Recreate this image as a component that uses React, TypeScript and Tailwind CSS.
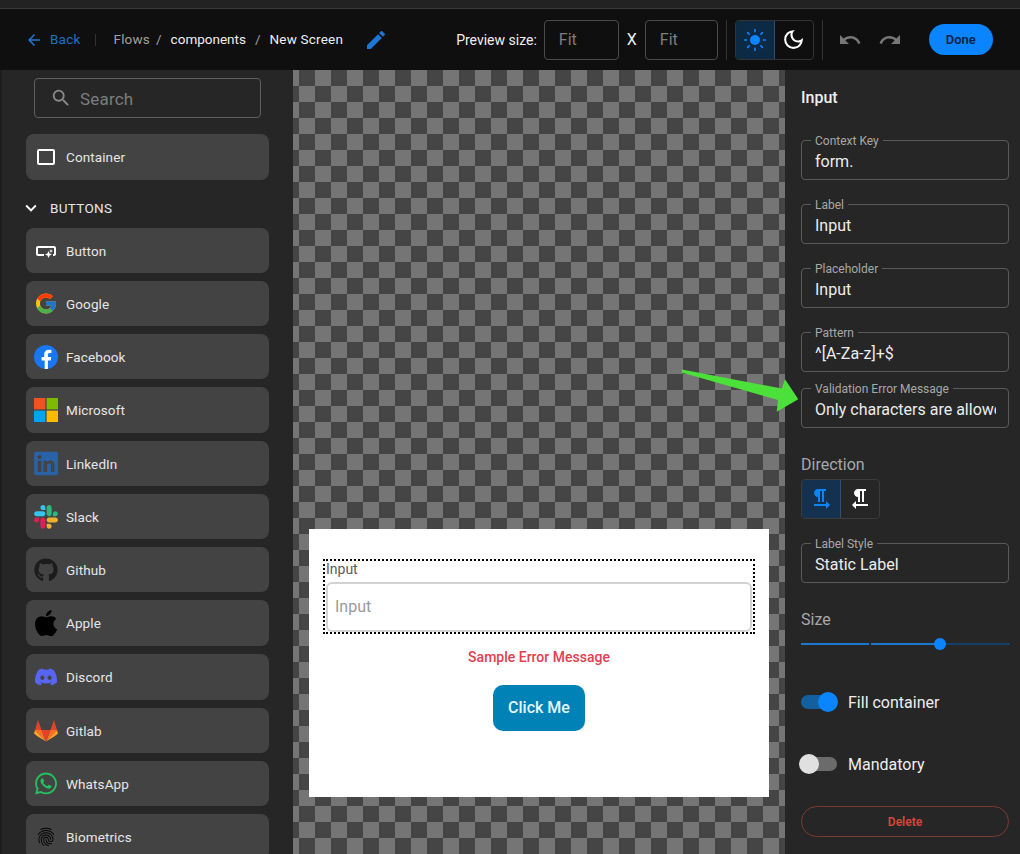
import type { ReactNode } from "react";
import {
  MdArrowBack,
  MdEdit,
  MdExpandMore,
  MdFormatTextdirectionLToR,
  MdFormatTextdirectionRToL,
  MdOutlineDarkMode,
  MdRedo,
  MdSearch,
  MdSmartButton,
  MdFingerprint,
  MdUndo,
} from "react-icons/md";
import { FcGoogle } from "react-icons/fc";
import { FaApple, FaDiscord, FaGithub, FaLinkedin, FaWhatsapp } from "react-icons/fa";

function FacebookIcon() {
  return (
    <svg viewBox="0 0 24 24" className="h-6 w-6">
      <circle cx="12" cy="12" r="12" fill="#1877f2" />
      <path
        fill="#fff"
        d="M16.7 15.5l.5-3.5h-3.3V9.8c0-1 .5-1.9 2-1.9h1.5v-3s-1.4-.2-2.7-.2c-2.7 0-4.5 1.7-4.5 4.6V12H7.6v3.5h3.1v8.4h3.2v-8.4z"
      />
    </svg>
  );
}

function MicrosoftIcon() {
  return (
    <svg viewBox="0 0 24 24" className="h-6 w-6">
      <rect width="11.4" height="11.4" fill="#f25022" />
      <rect x="12.6" width="11.4" height="11.4" fill="#7fba00" />
      <rect y="12.6" width="11.4" height="11.4" fill="#00a4ef" />
      <rect x="12.6" y="12.6" width="11.4" height="11.4" fill="#ffb900" />
    </svg>
  );
}

function SlackIcon() {
  return (
    <svg viewBox="0 0 127 127" className="h-6 w-6">
      <path
        fill="#E01E5A"
        d="M27.2 80c0 7.3-5.9 13.2-13.2 13.2C6.7 93.2.8 87.3.8 80c0-7.3 5.9-13.2 13.2-13.2h13.2V80zm6.6 0c0-7.3 5.9-13.2 13.2-13.2 7.3 0 13.2 5.9 13.2 13.2v33c0 7.3-5.9 13.2-13.2 13.2-7.3 0-13.2-5.9-13.2-13.2V80z"
      />
      <path
        fill="#36C5F0"
        d="M47 27c-7.3 0-13.2-5.9-13.2-13.2C33.8 6.5 39.7.6 47 .6c7.3 0 13.2 5.9 13.2 13.2V27H47zm0 6.7c7.3 0 13.2 5.9 13.2 13.2 0 7.3-5.9 13.2-13.2 13.2H13.9C6.6 60.1.7 54.2.7 46.9c0-7.3 5.9-13.2 13.2-13.2H47z"
      />
      <path
        fill="#2EB67D"
        d="M99.9 46.9c0-7.3 5.9-13.2 13.2-13.2 7.3 0 13.2 5.9 13.2 13.2 0 7.3-5.9 13.2-13.2 13.2H99.9V46.9zm-6.6 0c0 7.3-5.9 13.2-13.2 13.2-7.3 0-13.2-5.9-13.2-13.2V13.8C66.9 6.5 72.8.6 80.1.6c7.3 0 13.2 5.9 13.2 13.2v33.1z"
      />
      <path
        fill="#ECB22E"
        d="M80.1 99.8c7.3 0 13.2 5.9 13.2 13.2 0 7.3-5.9 13.2-13.2 13.2-7.3 0-13.2-5.9-13.2-13.2V99.8h13.2zm0-6.6c-7.3 0-13.2-5.9-13.2-13.2 0-7.3 5.9-13.2 13.2-13.2h33.1c7.3 0 13.2 5.9 13.2 13.2 0 7.3-5.9 13.2-13.2 13.2H80.1z"
      />
    </svg>
  );
}

function GitlabIcon() {
  return (
    <svg viewBox="0 0 24 24" className="h-6 w-6">
      <polygon fill="#e24329" points="4,1 1,11 7.6,11" />
      <polygon fill="#e24329" points="20,1 23,11 16.4,11" />
      <polygon fill="#fc6d26" points="1,11 7.6,11 12,22.5" />
      <polygon fill="#fc6d26" points="23,11 16.4,11 12,22.5" />
      <polygon fill="#fca326" points="1,11 0,14.5 3,17 12,22.5" />
      <polygon fill="#fca326" points="23,11 24,14.5 21,17 12,22.5" />
      <polygon fill="#e24329" points="7.6,11 16.4,11 12,22.5" />
    </svg>
  );
}

function SunIcon() {
  return (
    <svg viewBox="0 0 24 24" className="h-6 w-6" stroke="#0a84ff" strokeWidth="1.6" strokeLinecap="round">
      <circle cx="12" cy="12" r="5" fill="#0a84ff" stroke="none" />
      <path d="M12 1.5v2.2M12 20.3v2.2M1.5 12h2.2M20.3 12h2.2M4.6 4.6l1.5 1.5M17.9 17.9l1.5 1.5M4.6 19.4l1.5-1.5M17.9 6.1l1.5-1.5" />
    </svg>
  );
}

const items: { name: string; icon: ReactNode; tall?: boolean }[] = [
  { name: "Button", icon: <MdSmartButton className="h-6 w-6 text-white" /> },
  { name: "Google", icon: <FcGoogle className="h-[27px] w-[27px]" /> },
  { name: "Facebook", icon: <FacebookIcon /> },
  { name: "Microsoft", icon: <MicrosoftIcon />, tall: true },
  { name: "LinkedIn", icon: <FaLinkedin className="h-[27px] w-[27px] text-[#2a62a8]" /> },
  { name: "Slack", icon: <SlackIcon /> },
  { name: "Github", icon: <FaGithub className="h-6 w-6 text-[#1c1c1c]" /> },
  { name: "Apple", icon: <FaApple className="h-[30px] w-[30px] text-black" />, tall: true },
  { name: "Discord", icon: <FaDiscord className="h-6 w-6 text-[#5865f2]" />, tall: true },
  { name: "Gitlab", icon: <GitlabIcon /> },
  { name: "WhatsApp", icon: <FaWhatsapp className="h-[25px] w-[25px] text-[#25c060]" /> },
  { name: "Biometrics", icon: <MdFingerprint className="h-[22px] w-[22px] text-black" /> },
];

function Item({ name, icon, tall }: { name: string; icon: ReactNode; tall?: boolean }) {
  return (
    <div
      className={`flex shrink-0 items-center gap-2 rounded-lg bg-[#434343] pl-2 ${tall ? "h-[46px]" : "h-[45px]"}`}
    >
      <span className="flex h-6 w-6 items-center justify-center">{icon}</span>
      <span className={`text-[13.5px] tracking-[0.1px] text-[#e6e6e6] ${tall ? "" : "pt-[1.5px]"}`}>{name}</span>
    </div>
  );
}

function Field({ label, value }: { label: string; value: string }) {
  return (
    <div className="relative h-10 rounded border border-[#5a5a5a]">
      <span className="absolute left-[9px] top-[-7px] bg-[#262626] px-[4px] text-xs leading-[14px] text-[#a8a8a8]">
        {label}
      </span>
      <input
        readOnly
        value={value}
        className="mt-[9px] block h-6 w-[194px] bg-transparent pl-[13px] text-base text-[#ececec] outline-none"
      />
    </div>
  );
}

function Sidebar() {
  return (
    <aside className="flex h-full w-[291px] shrink-0 flex-col overflow-hidden bg-[#262626] pl-6 pr-6">
      <div className="ml-2 mt-2 flex h-10 w-[227px] shrink-0 items-center rounded border border-[#5f5f5f] pl-[15px]">
        <MdSearch className="h-[22px] w-[22px] text-[#8a8a8a]" />
        <span className="ml-2 pt-1 text-[17px] tracking-[0.2px] text-[#7d7d7d]">Search</span>
      </div>
      <div className="mt-4 flex h-[46px] shrink-0 items-center gap-[11px] rounded-lg bg-[#434343] pl-[11px]">
        <svg viewBox="0 0 18 16" className="h-4 w-[18px]">
          <rect x="1" y="1" width="16" height="14" rx="1" fill="none" stroke="#fff" strokeWidth="2" />
        </svg>
        <span className="text-[13.5px] tracking-[0.1px] text-[#e6e6e6]">Container</span>
      </div>
      <div className="flex h-12 shrink-0 items-center pt-2 text-[#e6e6e6]">
        <MdExpandMore className="ml-[-6px] h-[22px] w-[22px] text-white" />
        <span className="ml-2 text-[13.5px] tracking-[0.3px]">BUTTONS</span>
      </div>
      <div className="flex flex-col gap-2">
        {items.map((item) => (
          <Item key={item.name} {...item} />
        ))}
      </div>
    </aside>
  );
}

function Header() {
  return (
    <header className="flex h-[61px] shrink-0 items-center bg-[#0f0f0f] pl-[25px] text-[13.5px]">
      <MdArrowBack className="h-[18px] w-[18px] text-[#1b78d6]" />
      <span className="ml-[7px] tracking-[0.2px] text-[#1b70c8]">Back</span>
      <span className="ml-[15px] h-3 w-px bg-[#333]" />
      <span className="ml-[17px] tracking-[0.2px] text-[#a0a0a0]">Flows</span>
      <span className="ml-[6px] text-[#a0a0a0]">/</span>
      <span className="ml-[9px] text-[#eeeeee]">components</span>
      <span className="ml-[9px] text-[#a0a0a0]">/</span>
      <span className="ml-[9px] tracking-[0.2px] text-[#eeeeee]">New Screen</span>
      <MdEdit className="ml-[21px] h-[24px] w-[24px] text-[#1b78d6]" />
      <span className="ml-[68px] text-sm text-[#eeeeee]">Preview size:</span>
      <span className="ml-[7px] flex h-10 w-[75px] items-center rounded border border-[#4a4a4a] pl-[14px] text-base text-[#7d7d7d]">
        Fit
      </span>
      <span className="ml-2 text-base text-[#eeeeee]">X</span>
      <span className="ml-[8px] flex h-10 w-[73px] items-center rounded border border-[#4a4a4a] pl-[14px] text-base text-[#7d7d7d]">
        Fit
      </span>
      <span className="ml-2 h-10 w-px bg-[#333]" />
      <div className="ml-2 flex h-10 w-[79px] overflow-hidden rounded border border-[#333]">
        <span className="flex w-[39px] items-center justify-center border-r border-[#30506f] bg-[#0d2a45]">
          <SunIcon />
        </span>
        <span className="flex flex-1 items-center justify-center">
          <MdOutlineDarkMode className="h-[25px] w-[25px] text-white" />
        </span>
      </div>
      <span className="ml-2 h-10 w-px bg-[#333]" />
      <MdUndo className="ml-[15px] h-6 w-6 text-[#777]" />
      <MdRedo className="ml-4 h-6 w-6 text-[#777]" />
      <button className="ml-[27px] h-[31px] w-16 rounded-full bg-[#0a84ff] text-[13px] font-semibold text-[#0b1f44]">
        Done
      </button>
    </header>
  );
}

function Canvas() {
  return (
    <main className="flex h-full w-[492px] shrink-0 flex-col justify-end bg-[conic-gradient(#757575_25%,#454545_0_50%,#757575_0_75%,#454545_0)] bg-[length:32px_32px] bg-[position:6px_0px] px-4 pb-[57px]">
      <div className="flex h-[268px] flex-col items-center bg-white px-[14px] pt-[30px]">
        <div className="h-[75px] w-full border-2 border-dotted border-black">
          <div className="h-[21px] pl-px text-sm leading-[17px] text-[#5c5c5c]">Input</div>
          <div className="ml-px mr-px flex h-[50px] items-center rounded-md border-2 border-[#d2d4d4] pl-[7px] text-base text-[#9a9a9a]">
            Input
          </div>
        </div>
        <div className="mt-[14px] text-sm font-medium leading-[18px] text-[#e2404f]">Sample Error Message</div>
        <button className="mt-[19px] h-[46px] w-[92px] rounded-[10px] bg-[#0082b6] text-base font-medium text-[#e4f6ff]">
          Click Me
        </button>
      </div>
    </main>
  );
}

function Switch({ on }: { on?: boolean }) {
  return (
    <span className="relative block h-[14px] w-9">
      <span className={`block h-[14px] w-9 rounded-full ${on ? "bg-[#14609f]" : "bg-[#6b6b6b]"}`} />
      <span
        className={`absolute top-[-3px] h-5 w-5 rounded-full ${on ? "right-[-1px] bg-[#0a84ff]" : "left-[-2px] bg-[#e0e0e0]"}`}
      />
    </span>
  );
}

function Inspector() {
  return (
    <aside className="flex h-full w-[235px] shrink-0 flex-col bg-[#262626] pl-4 pr-[11px] pt-[18px]">
      <h2 className="text-base font-medium leading-5 text-[#eeeeee]">Input</h2>
      <div className="mt-[32px] flex flex-col gap-6">
        <Field label="Context Key" value="form." />
        <Field label="Label" value="Input" />
        <Field label="Placeholder" value="Input" />
        <Field label="Pattern" value="^[A-Za-z]+$" />
      </div>
      <div className="mt-4">
        <Field label="Validation Error Message" value="Only characters are allowed" />
      </div>
      <div className="mt-[27px] text-base leading-5 text-[#a8a8a8]">Direction</div>
      <div className="mt-[4px] flex h-10 w-[79px] overflow-hidden rounded border border-[#3c3c3c]">
        <span className="flex w-[39px] items-center justify-center border-r border-[#30506f] bg-[#14324f]">
          <MdFormatTextdirectionLToR className="h-6 w-6 text-[#0a84ff]" />
        </span>
        <span className="flex flex-1 items-center justify-center">
          <MdFormatTextdirectionRToL className="h-6 w-6 text-white" />
        </span>
      </div>
      <div className="mt-6">
        <Field label="Label Style" value="Static Label" />
      </div>
      <div className="mt-[27px] text-base leading-5 text-[#a8a8a8]">Size</div>
      <div className="relative mt-[13px] flex h-[2px] w-[209px] gap-[2px]">
        <span className="h-[2px] w-[68px] bg-[#1a78d0]" />
        <span className="h-[2px] w-[69px] bg-[#1a78d0]" />
        <span className="h-[2px] flex-1 bg-[#12406b]" />
        <span className="absolute left-[133px] top-[-5px] h-3 w-3 rounded-full bg-[#0a84ff]" />
      </div>
      <div className="mt-[47px] flex h-5 items-center">
        <Switch on />
        <span className="ml-[11px] pt-[2px] text-base text-[#eeeeee]">Fill container</span>
      </div>
      <div className="mt-[42px] flex h-5 items-center">
        <Switch />
        <span className="ml-[11px] pt-[2px] text-base text-[#eeeeee]">Mandatory</span>
      </div>
      <button className="mt-[32px] h-[31px] w-[208px] rounded-full border border-[#7d3a32] text-xs font-semibold text-[#d8473a]">
        Delete
      </button>
    </aside>
  );
}

export default function App() {
  return (
    <div className="relative flex h-[854px] w-[1020px] flex-col overflow-hidden bg-[#1e1e1e] font-['Roboto',sans-serif]">
      <div className="h-[9px] shrink-0 border-b border-[#3a3a3a] bg-[#222]" />
      <Header />
      <div className="flex min-h-0 flex-1 pl-[2px]">
        <Sidebar />
        <Canvas />
        <Inspector />
      </div>
      <svg viewBox="0 0 120 44" className="absolute left-[680px] top-[369px] h-[44px] w-[120px]">
        <polygon fill="#4ce03a" points="2,0.5 101.7,19.5 105,10.3 118.3,30.3 96.7,42.7 98,31 1.5,3.5" />
      </svg>
    </div>
  );
}
